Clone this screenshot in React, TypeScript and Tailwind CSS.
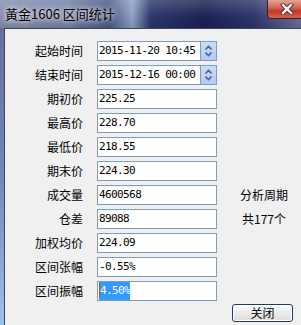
const rows: { label: string; value: string; spin?: boolean; side?: string; selected?: boolean }[] = [
  { label: "起始时间", value: "2015-11-20 10:45", spin: true },
  { label: "结束时间", value: "2015-12-16 00:00", spin: true },
  { label: "期初价", value: "225.25" },
  { label: "最高价", value: "228.70" },
  { label: "最低价", value: "218.55" },
  { label: "期末价", value: "224.30" },
  { label: "成交量", value: "4600568", side: "分析周期" },
  { label: "仓差", value: "89088", side: "共177个" },
  { label: "加权均价", value: "224.09" },
  { label: "区间张幅", value: "-0.55%" },
  { label: "区间振幅", value: "4.50%", selected: true },
];

function Spinner() {
  return (
    <div className="h-full w-[16px] border-l border-[#7f9db9] bg-[linear-gradient(180deg,#c9dcfb_0%,#b1caf3_100%)]">
      <svg width="15" height="18" viewBox="0 0 15 18">
        <path d="M4.5 7.5 L7.5 4.5 L10.5 7.5" fill="none" stroke="#4a5f8a" strokeWidth="1.6" />
        <path d="M4.5 10.5 L7.5 13.5 L10.5 10.5" fill="none" stroke="#4a5f8a" strokeWidth="1.6" />
      </svg>
    </div>
  );
}

export default function App() {
  return (
    <div className="relative h-[325px] w-[301px] overflow-hidden bg-[#f0f0f0] font-['Noto_Sans_CJK_SC',sans-serif]">
      {/* title bar */}
      <div className="relative h-[28px] bg-[linear-gradient(90deg,#858ead_0%,#7380a6_22%,#4a5686_36%,#8fa2c6_44%,#2d3869_50%,#1b2152_68%,#2e356a_84%,#6c6f99_100%)]">
        <div className="absolute inset-0 bg-[linear-gradient(180deg,rgba(255,255,255,0.18)_0%,rgba(255,255,255,0)_60%,rgba(0,0,0,0.1)_100%)]" />
        <div className="relative pl-[5px] pt-[5px] text-[13px] leading-[18px] text-black [text-shadow:0_0_5px_rgba(255,255,255,0.95),0_0_9px_rgba(255,255,255,0.7)]">
          黃金1606 区间统计
        </div>
        <div className="absolute right-[-10px] top-0 flex h-[19px] w-[44px] items-center justify-start rounded-bl-[4px] border-b border-l border-[#4a1a1a] bg-[linear-gradient(180deg,#e7a497_0%,#d46a58_40%,#c23a28_60%,#d4604c_100%)] pl-[12px]">
          <svg width="14" height="12" viewBox="0 0 14 12">
            <path d="M3 2 L11 10 M11 2 L3 10" stroke="#5a2a2a" strokeWidth="4.2" strokeLinecap="square" />
            <path d="M3 2 L11 10 M11 2 L3 10" stroke="#ffffff" strokeWidth="2.4" strokeLinecap="square" />
          </svg>
        </div>
      </div>

      <div className="flex h-[297px]">
        {/* left frame */}
        <div className="w-[4px] bg-[linear-gradient(180deg,#666f9a_0%,#7487b4_50%,#9cc1e8_100%)]" />

        {/* client area */}
        <div className="flex-1 border-l border-t border-[#3d4457] bg-[#f0f0f0] pt-[12px]">
          <div className="flex flex-col gap-[4px]">
            {rows.map((r) => (
              <div key={r.label} className="flex h-[20px] items-center">
                <div className="w-[78px] text-right text-[12px] leading-[20px] text-black">{r.label}</div>
                <div className="ml-[14px] flex h-[20px] w-[120px] items-center border border-[#7f9db9] bg-white">
                  <div className="flex-1 pl-[1px] font-['DejaVu_Sans_Mono',monospace] text-[11px] leading-[18px] tracking-[-0.6px] text-black">
                    {r.selected ? (
                      <span className="relative inline-block bg-[#3399ff] pl-[1px] text-white">
                        <span className="absolute left-0 top-[1px] h-[15px] w-[1px] bg-[#b8501a]" />
                        {r.value}
                      </span>
                    ) : (
                      r.value
                    )}
                  </div>
                  {r.spin && <Spinner />}
                </div>
                {r.side && (
                  <div className="ml-[23px] w-[48px] text-center text-[12px] leading-[20px] text-black">{r.side}</div>
                )}
              </div>
            ))}
          </div>

          <div className="mt-[3px] pl-[227px]">
            <button className="flex h-[18px] w-[61px] items-center justify-center rounded-[3px] border border-[#1f3a68] bg-[linear-gradient(180deg,#fbfbfb_0%,#ececec_50%,#dcdcdc_100%)] text-[12px] leading-[16px] text-black shadow-[inset_0_0_0_1px_#ffffff]">
              关闭
            </button>
          </div>
        </div>
      </div>
    </div>
  );
}
